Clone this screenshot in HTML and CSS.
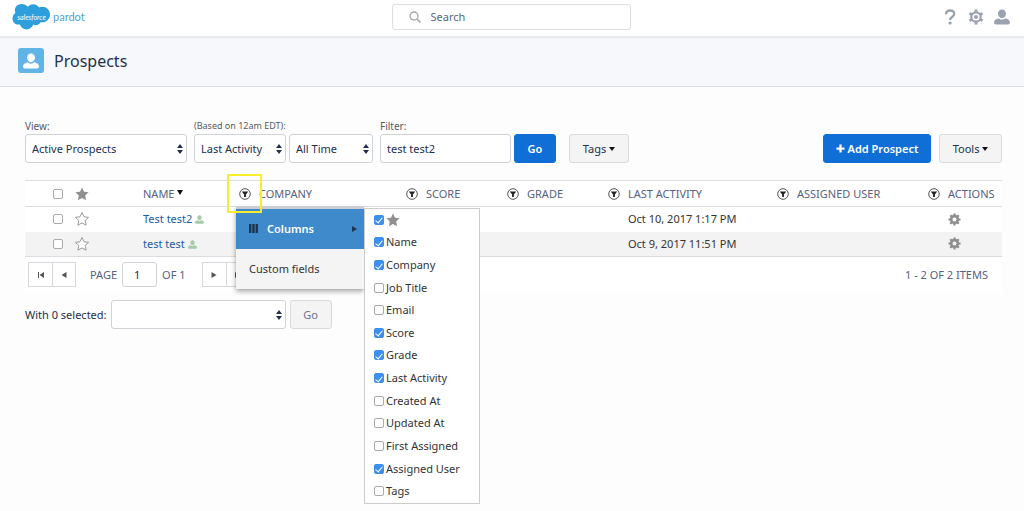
FILE: index.html
```
<!DOCTYPE html>
<html lang="en">
<head>
  <meta charset="UTF-8">
  <title>Prospects</title>
  <link rel="stylesheet" href="styles.css">
</head>

<body>
  <!-- shared icons -->
  <svg class="sprite" aria-hidden="true">
    <symbol id="filter" viewBox="0 0 12 12">
      <circle cx="6" cy="6" r="5.3" fill="#fff" stroke="#444" stroke-width="0.9"/>
      <path d="M2.8 3.6h6.4L6.9 6.5v2.6H5.1V6.5z" fill="#222"/>
    </symbol>
    <symbol id="star" viewBox="0 0 14 14">
      <path d="M7 .5l2 4.3 4.6.5-3.4 3.2.9 4.7L7 10.9l-4.1 2.3.9-4.7L.4 5.3 5 4.8z"/>
    </symbol>
    <symbol id="person" viewBox="0 0 16 16">
      <path d="M8 0.5c2.4 0 4 1.8 4 4.1 0 2.5-1.7 4.6-4 4.6S4 7.100 4 4.600C4 2.300 5.600.5 8 .5zM4.600 9.300C5.500 10.200 6.700 10.700 8 10.700s2.500-.5 3.400-1.400c2.700.7 4.600 2 4.600 4.200 0 1.300-.9 2-2 2H2c-1.100 0-2-.7-2-2 0-2.200 1.900-3.500 4.600-4.200z"/>
    </symbol>
    <symbol id="gear" viewBox="0 0 14 14">
      <circle cx="7" cy="7" r="3.600" fill="none" stroke="#8e8e8e" stroke-width="2.800"/>
      <path d="M7 .5v2.500M7 11v2.500M.5 7H3M11 7h2.500M2.400 2.400l1.700 1.700M9.900 9.900l1.700 1.700M2.400 11.600l1.700-1.700M9.900 4.100l1.700-1.700" stroke="#8e8e8e" stroke-width="2.400"/>
    </symbol>
  </svg>

  <header class="topbar">
    <a href="#" class="logo">
      <span class="cloud">
        <svg viewBox="0 0 40 28" aria-hidden="true">
          <path d="M16.500 3.500C18 1.800 20 1 22 1c2.400 0 4.500 1.300 5.700 3.300 1-.5 2.100-.8 3.300-.8 4.500 0 8 3.600 8 8s-3.500 8-8 8c-.6 0-1.100 0-1.600-.2-1 1.800-2.900 3-5.100 3-.9 0-1.800-.2-2.500-.6-1.100 3-3.800 5-6.800 5-3.200 0-5.900-2-7-5-.4.1-.9.100-1.400.1C3 21.800.5 19 .5 15.500c0-2.400 1.200-4.400 3-5.500-.4-.9-.6-1.800-.6-2.800C2.900 3.500 6 .6 9.800.6c2.700 0 5 1.100 6.700 2.900z" fill="#2c9fdc"/>
        </svg>
        <span class="cloud-text">salesforce</span>
      </span>
      <span class="product">pardot</span>
    </a>
    <label class="search">
      <svg viewBox="0 0 12 12" aria-hidden="true">
        <circle cx="5" cy="5" r="4" fill="none" stroke="#a5a9b0" stroke-width="1.300"/>
        <path d="M8 8l3.500 3.500" stroke="#a5a9b0" stroke-width="1.600"/>
      </svg>
      <input type="text" placeholder="Search" aria-label="Search">
    </label>
    <nav class="top-icons">
      <button type="button" aria-label="Help">
        <svg viewBox="0 0 16 16"><path d="M4 5.200C4 2.800 5.700 1.500 8 1.500s4.200 1.300 4.200 3.500c0 3.200-4.100 2.900-4.100 6" fill="none" stroke="#9ba3b0" stroke-width="2.400"/><circle cx="8.100" cy="14" r="1.600" fill="#9ba3b0"/></svg>
      </button>
      <button type="button" aria-label="Settings">
        <svg viewBox="0 0 16 16"><circle cx="8" cy="8" r="4.700" fill="none" stroke="#9ba3b0" stroke-width="2.200"/><path d="M8 .6v2.800M8 12.600v2.800M1.500 4.300l2.500 1.400M12 10.300l2.500 1.400M1.500 11.700l2.500-1.400M12 5.700l2.500-1.400" stroke="#9ba3b0" stroke-width="3"/><circle cx="8" cy="8" r="2" fill="#9ba3b0"/></svg>
      </button>
      <button type="button" aria-label="Account">
        <svg viewBox="0 0 16 16" fill="#9ba3b0"><use href="#person"/></svg>
      </button>
    </nav>
  </header>

  <div class="page-title">
    <span class="title-icon"><svg viewBox="0 0 16 16" fill="#fff"><use href="#person"/></svg></span>
    <h1>Prospects</h1>
  </div>

  <main>
    <form class="toolbar">
      <div class="field view">
        <label for="view">View:</label>
        <select id="view"><option>Active Prospects</option></select>
      </div>
      <div class="field">
        <label for="based" class="small">(Based on 12am EDT):</label>
        <div class="pair">
          <select id="based" class="based"><option>Last Activity</option></select>
          <select class="range" aria-label="Time range"><option>All Time</option></select>
        </div>
      </div>
      <div class="field">
        <label for="filterText">Filter:</label>
        <div class="pair">
          <input type="text" id="filterText" class="text" value="test test2">
          <button type="button" class="btn primary go">Go</button>
        </div>
      </div>
      <button type="button" class="btn tags">Tags <i class="caret"></i></button>
      <div class="right">
        <button type="button" class="btn primary add">
          <svg viewBox="0 0 10 10" aria-hidden="true"><path d="M5 .5v9M.5 5h9" stroke="#fff" stroke-width="2.500"/></svg>
          Add Prospect
        </button>
        <button type="button" class="btn tools">Tools <i class="caret"></i></button>
      </div>
    </form>

    <div class="grid">
      <table>
        <colgroup>
          <col class="c-check"><col class="c-star"><col class="c-name"><col class="c-company"><col class="c-score">
          <col class="c-grade"><col class="c-last"><col class="c-user"><col class="c-actions">
        </colgroup>
        <thead>
          <tr>
            <th class="check"><input type="checkbox" aria-label="Select all"></th>
            <th><svg class="star full" viewBox="0 0 14 14"><use href="#star"/></svg></th>
            <th class="name">
              <div class="head">
                <span>NAME <i class="caret sort"></i></span>
                <div class="anchor">
                  <button type="button" class="filter" aria-label="Column menu"><svg viewBox="0 0 12 12"><use href="#filter"/></svg></button>
                  <div class="menu">
                    <button type="button" class="menu-item active">
                      <svg class="bars" viewBox="0 0 9 9" aria-hidden="true"><path d="M0 0h2.400v9H0zM3.300 0h2.400v9H3.300zM6.600 0H9v9H6.600z" fill="#1c3550"/></svg>
                      <span>Columns</span>
                      <svg class="arrow" viewBox="0 0 5 6" aria-hidden="true"><path d="M0 0l5 3-5 3z" fill="#1c3550"/></svg>
                    </button>
                    <button type="button" class="menu-item">Custom fields</button>
                    <div class="submenu">
                      <label><input type="checkbox" checked aria-label="Starred"><svg class="star full" viewBox="0 0 14 14"><use href="#star"/></svg></label>
                      <label><input type="checkbox" checked>Name</label>
                      <label><input type="checkbox" checked>Company</label>
                      <label><input type="checkbox">Job Title</label>
                      <label><input type="checkbox">Email</label>
                      <label><input type="checkbox" checked>Score</label>
                      <label><input type="checkbox" checked>Grade</label>
                      <label><input type="checkbox" checked>Last Activity</label>
                      <label><input type="checkbox">Created At</label>
                      <label><input type="checkbox">Updated At</label>
                      <label><input type="checkbox">First Assigned</label>
                      <label><input type="checkbox" checked>Assigned User</label>
                      <label><input type="checkbox">Tags</label>
                    </div>
                  </div>
                  <div class="highlight"></div>
                </div>
              </div>
            </th>
            <th><div class="head"><span>COMPANY</span><button type="button" class="filter" aria-label="Column menu"><svg viewBox="0 0 12 12"><use href="#filter"/></svg></button></div></th>
            <th><div class="head"><span>SCORE</span><button type="button" class="filter" aria-label="Column menu"><svg viewBox="0 0 12 12"><use href="#filter"/></svg></button></div></th>
            <th><div class="head"><span>GRADE</span><button type="button" class="filter" aria-label="Column menu"><svg viewBox="0 0 12 12"><use href="#filter"/></svg></button></div></th>
            <th><div class="head"><span>LAST ACTIVITY</span><button type="button" class="filter" aria-label="Column menu"><svg viewBox="0 0 12 12"><use href="#filter"/></svg></button></div></th>
            <th><div class="head"><span>ASSIGNED USER</span><button type="button" class="filter" aria-label="Column menu"><svg viewBox="0 0 12 12"><use href="#filter"/></svg></button></div></th>
            <th>ACTIONS</th>
          </tr>
        </thead>
        <tbody>
          <tr>
            <td class="check"><input type="checkbox" aria-label="Select Test test2"></td>
            <td><svg class="star" viewBox="0 0 14 14"><use href="#star"/></svg></td>
            <td class="name"><a href="#">Test test2</a> <svg class="who" viewBox="0 0 16 16"><use href="#person"/></svg></td>
            <td></td><td></td><td></td>
            <td>Oct 10, 2017 1:17 PM</td>
            <td></td>
            <td><button type="button" class="gear" aria-label="Actions"><svg viewBox="0 0 14 14"><use href="#gear"/></svg></button></td>
          </tr>
          <tr>
            <td class="check"><input type="checkbox" aria-label="Select test test"></td>
            <td><svg class="star" viewBox="0 0 14 14"><use href="#star"/></svg></td>
            <td class="name"><a href="#">test test</a> <svg class="who" viewBox="0 0 16 16"><use href="#person"/></svg></td>
            <td></td><td></td><td></td>
            <td>Oct 9, 2017 11:51 PM</td>
            <td></td>
            <td><button type="button" class="gear" aria-label="Actions"><svg viewBox="0 0 14 14"><use href="#gear"/></svg></button></td>
          </tr>
        </tbody>
      </table>

      <div class="pager">
        <div class="pager-buttons">
          <button type="button" aria-label="First page"><svg viewBox="0 0 8 8"><path d="M1 1h1v6H1zM7 1v6L2.500 4z"/></svg></button>
          <button type="button" aria-label="Previous page"><svg viewBox="0 0 8 8"><path d="M6.500 1v6L1.500 4z"/></svg></button>
        </div>
        <label for="page">PAGE</label>
        <input type="text" id="page" value="1">
        <span>OF 1</span>
        <div class="pager-buttons next">
          <button type="button" aria-label="Next page"><svg viewBox="0 0 8 8"><path d="M1.500 1v6l5-3z"/></svg></button>
          <button type="button" aria-label="Last page"><svg viewBox="0 0 8 8"><path d="M1 1v6l4.500-3zM6 1h1v6H6z"/></svg></button>
        </div>
        <span class="count">1 - 2 OF 2 ITEMS</span>
      </div>
    </div>

    <form class="bulk">
      <label for="bulk">With 0 selected:</label>
      <select id="bulk"><option></option></select>
      <button type="button" class="btn go muted">Go</button>
    </form>
  </main>
</body>
</html>
```
FILE: styles.css
```
* {
  box-sizing: border-box;
}
body {
  min-height: 100vh;
  margin: 0;
  background-color: #fdfdfd;
  color: #333;
  font-family: "Noto Sans", "Open Sans", sans-serif;
  font-size: 11px;
  line-height: 16px;
}
button, input, select {
  margin: 0;
  font: inherit;
  color: #22304f;
}
button {
  padding: 0;
  border: 0;
  background: none;
  cursor: pointer;
}
svg {
  display: block;
}
a {
  color: #1c5ba8;
  text-decoration: none;
}
.sprite {
  position: absolute;
  width: 0;
  height: 0;
}

/* top bar */
.topbar {
  display: grid;
  grid-template-columns: 1fr 239px 1fr;
  align-items: center;
  height: 38px;
  padding: 0 14px 3px 12px;
  border-bottom: 2px solid #e8eaec;
  background-color: #fff;
}
.logo {
  display: flex;
  align-items: center;
  gap: 2px;
}
.cloud {
  display: grid;
  place-items: center;
}
.cloud > * {
  grid-area: 1 / 1;
}
.cloud svg {
  width: 39px;
  height: 28px;
}
.cloud-text {
  color: #fff;
  font-family: Lato, sans-serif;
  font-size: 7px;
  font-style: italic;
  line-height: 8px;
}
.product {
  color: #4ba5d6;
  font-family: Lato, sans-serif;
}
.search {
  display: flex;
  align-items: center;
  gap: 10px;
  height: 26px;
  padding: 0 16px;
  border: 1px solid #dcdee2;
  border-radius: 3px;
  background-color: #fff;
}
.search svg {
  width: 12px;
  height: 12px;
}
.search input {
  flex: 1;
  min-width: 0;
  padding: 0;
  border: 0;
  outline: 0;
}
.search input::placeholder {
  color: #5b6580;
}
.top-icons {
  display: flex;
  justify-content: flex-end;
  gap: 10px;
}
.top-icons svg {
  width: 16px;
  height: 16px;
}

.page-title {
  display: flex;
  align-items: center;
  gap: 10px;
  height: 49px;
  padding: 0 18px 3px;
  border-bottom: 1px solid #dcdfe4;
  background-color: #f6f8fb;
}
.title-icon {
  display: grid;
  place-items: center;
  width: 26px;
  height: 25px;
  border-radius: 3px;
  background-color: #62b4e6;
}
.title-icon svg {
  width: 16px;
  height: 16px;
}
h1 {
  margin: 0;
  color: #22304f;
  font-size: 16px;
  font-weight: normal;
  line-height: 24px;
}

main {
  padding: 31px 22px 0 25px;
}

/* toolbar */
.toolbar {
  display: flex;
  align-items: flex-end;
  gap: 7px;
}
.field label {
  display: block;
  color: #555b66;
  font-size: 10px;
}
.field label.small {
  font-size: 9px;
}
.pair {
  display: flex;
  gap: 3px;
}
select, .text {
  display: block;
  height: 29px;
  padding: 0 6px;
  border: 1px solid #cfd2d6;
  border-radius: 3px;
  background-color: #fff;
}
select {
  appearance: none;
  background-image: url("data:image/svg+xml,%3Csvg xmlns='http://www.w3.org/2000/svg' width='6' height='10'%3E%3Cpath d='M0 4l3-4 3 4zM0 6l3 4 3-4z' fill='%2322304f'/%3E%3C/svg%3E");
  background-position: right 3px center;
  background-repeat: no-repeat;
}
.view select {
  width: 162px;
}
.based {
  width: 92px;
}
.range {
  width: 84px;
}
.text {
  width: 131px;
}
.btn {
  height: 29px;
  border: 1px solid #d9dadc;
  border-radius: 3px;
  background-color: #f4f4f4;
}
.btn.primary {
  border-color: #0f6fd6;
  background-color: #0f6fd6;
  color: #fff;
  font-weight: 600;
}
.go {
  width: 42px;
}
.muted {
  color: #69728a;
}
.tags {
  width: 60px;
  margin-left: 6px;
}
.right {
  display: flex;
  gap: 8px;
  margin-left: auto;
}
.add {
  display: flex;
  align-items: center;
  justify-content: center;
  gap: 3px;
  width: 108px;
}
.add svg {
  width: 9px;
  height: 9px;
}
.tools {
  width: 63px;
}
.caret {
  display: inline-block;
  border: 3px solid transparent;
  border-top: 4px solid #111;
  border-bottom: 0;
  vertical-align: 2px;
}
.caret.sort {
  border-top-width: 5px;
  vertical-align: 3px;
}

/* checkboxes */
input[type="checkbox"] {
  appearance: none;
  display: grid;
  place-items: center;
  width: 10px;
  height: 10px;
  border: 1px solid #aaa;
  border-radius: 2px;
  background-color: #fff;
}
input[type="checkbox"]:checked {
  border-color: #3b8ff0;
  background-color: #3b8ff0;
}
input[type="checkbox"]:checked::before {
  content: "";
  width: 3px;
  height: 6px;
  border: solid #fff;
  border-width: 0 1px 1px 0;
  transform: rotate(40deg);
}

/* prospects table */
.grid {
  margin-top: 17px;
  background-color: #fff;
}
table {
  width: 100%;
  border-collapse: collapse;
  table-layout: fixed;
}
.c-check {
  width: 46px;
}
.c-star {
  width: 48px;
}
.c-company {
  width: 167px;
}
.c-score, .c-grade {
  width: 101px;
}
.c-last {
  width: 169px;
}
.c-user {
  width: 151px;
}
.c-actions {
  width: 58px;
}
th, td {
  height: 25px;
  padding: 0 4px;
  text-align: left;
  white-space: nowrap;
}
th {
  height: 26px;
  border-top: 1px solid #dcdde0;
  border-bottom: 1px solid #dcdde0;
  color: #56617f;
  font-weight: normal;
}
tbody tr:nth-child(2) {
  background-color: #f3f3f3;
}
tbody tr:last-child {
  border-bottom: 1px solid #dcdde0;
}
.check {
  padding-left: 28px;
}
.name {
  padding-left: 24px;
}
.head {
  display: flex;
  align-items: center;
  justify-content: space-between;
}
.anchor {
  position: relative;
}
.filter {
  display: block;
}
.filter svg {
  width: 12px;
  height: 12px;
}
.star {
  width: 14px;
  height: 14px;
  fill: #fff;
  stroke: #999;
  stroke-width: 1;
}
.star.full {
  fill: #909090;
  stroke: none;
}
.who {
  display: inline-block;
  width: 9px;
  height: 9px;
  fill: #a3cda8;
  vertical-align: -1px;
}
.gear {
  display: block;
}
.gear svg {
  width: 13px;
  height: 13px;
}

/* column menu */
.menu {
  position: absolute;
  top: 19px;
  left: -3px;
  z-index: 1;
  width: 128px;
  border-top: 2px solid #c9ccd0;
  background-color: #f4f4f4;
  box-shadow: 0 2px 5px rgba(0, 0, 0, 0.4);
}
.menu-item {
  display: flex;
  align-items: center;
  gap: 9px;
  width: 100%;
  height: 40px;
  padding: 0 7px 0 13px;
  color: #333;
}
.menu-item.active {
  background-color: #3f8aca;
  color: #fff;
  font-weight: 600;
}
.bars {
  width: 9px;
  height: 9px;
}
.arrow {
  width: 5px;
  height: 6px;
  margin-left: auto;
}
.submenu {
  position: absolute;
  top: -1px;
  left: 100%;
  display: grid;
  grid-auto-rows: 1fr;
  width: 116px;
  height: 296px;
  border: 1px solid #ccc;
  background-color: #fff;
  color: #333;
}
.submenu label {
  display: flex;
  align-items: center;
  gap: 2px;
  padding-left: 9px;
}
.highlight {
  position: absolute;
  top: -14px;
  left: -12px;
  z-index: 2;
  width: 35px;
  height: 39px;
  border: 2px solid #f8ee2c;
  pointer-events: none;
}

/* pager */
.pager {
  display: flex;
  align-items: center;
  height: 35px;
  padding: 0 14px 0 3px;
  color: #56617f;
}
.pager-buttons {
  display: flex;
  margin-right: 14px;
  border: 1px solid #d6d8dc;
}
.pager-buttons button {
  display: grid;
  place-items: center;
  width: 23px;
  height: 23px;
}
.pager-buttons button + button {
  border-left: 1px solid #d6d8dc;
}
.pager-buttons svg {
  width: 8px;
  height: 8px;
  fill: #555;
}
.pager input {
  width: 35px;
  height: 25px;
  margin: 0 5px;
  padding: 0 11px;
  border: 1px solid #cfd2d6;
  border-radius: 3px;
}
.pager .next {
  margin-left: 16px;
}
.count {
  margin-left: auto;
}

.bulk {
  display: flex;
  align-items: center;
  gap: 4px;
  margin-top: 8px;
}
.bulk label {
  color: #22304f;
}
.bulk select {
  width: 175px;
}
```
